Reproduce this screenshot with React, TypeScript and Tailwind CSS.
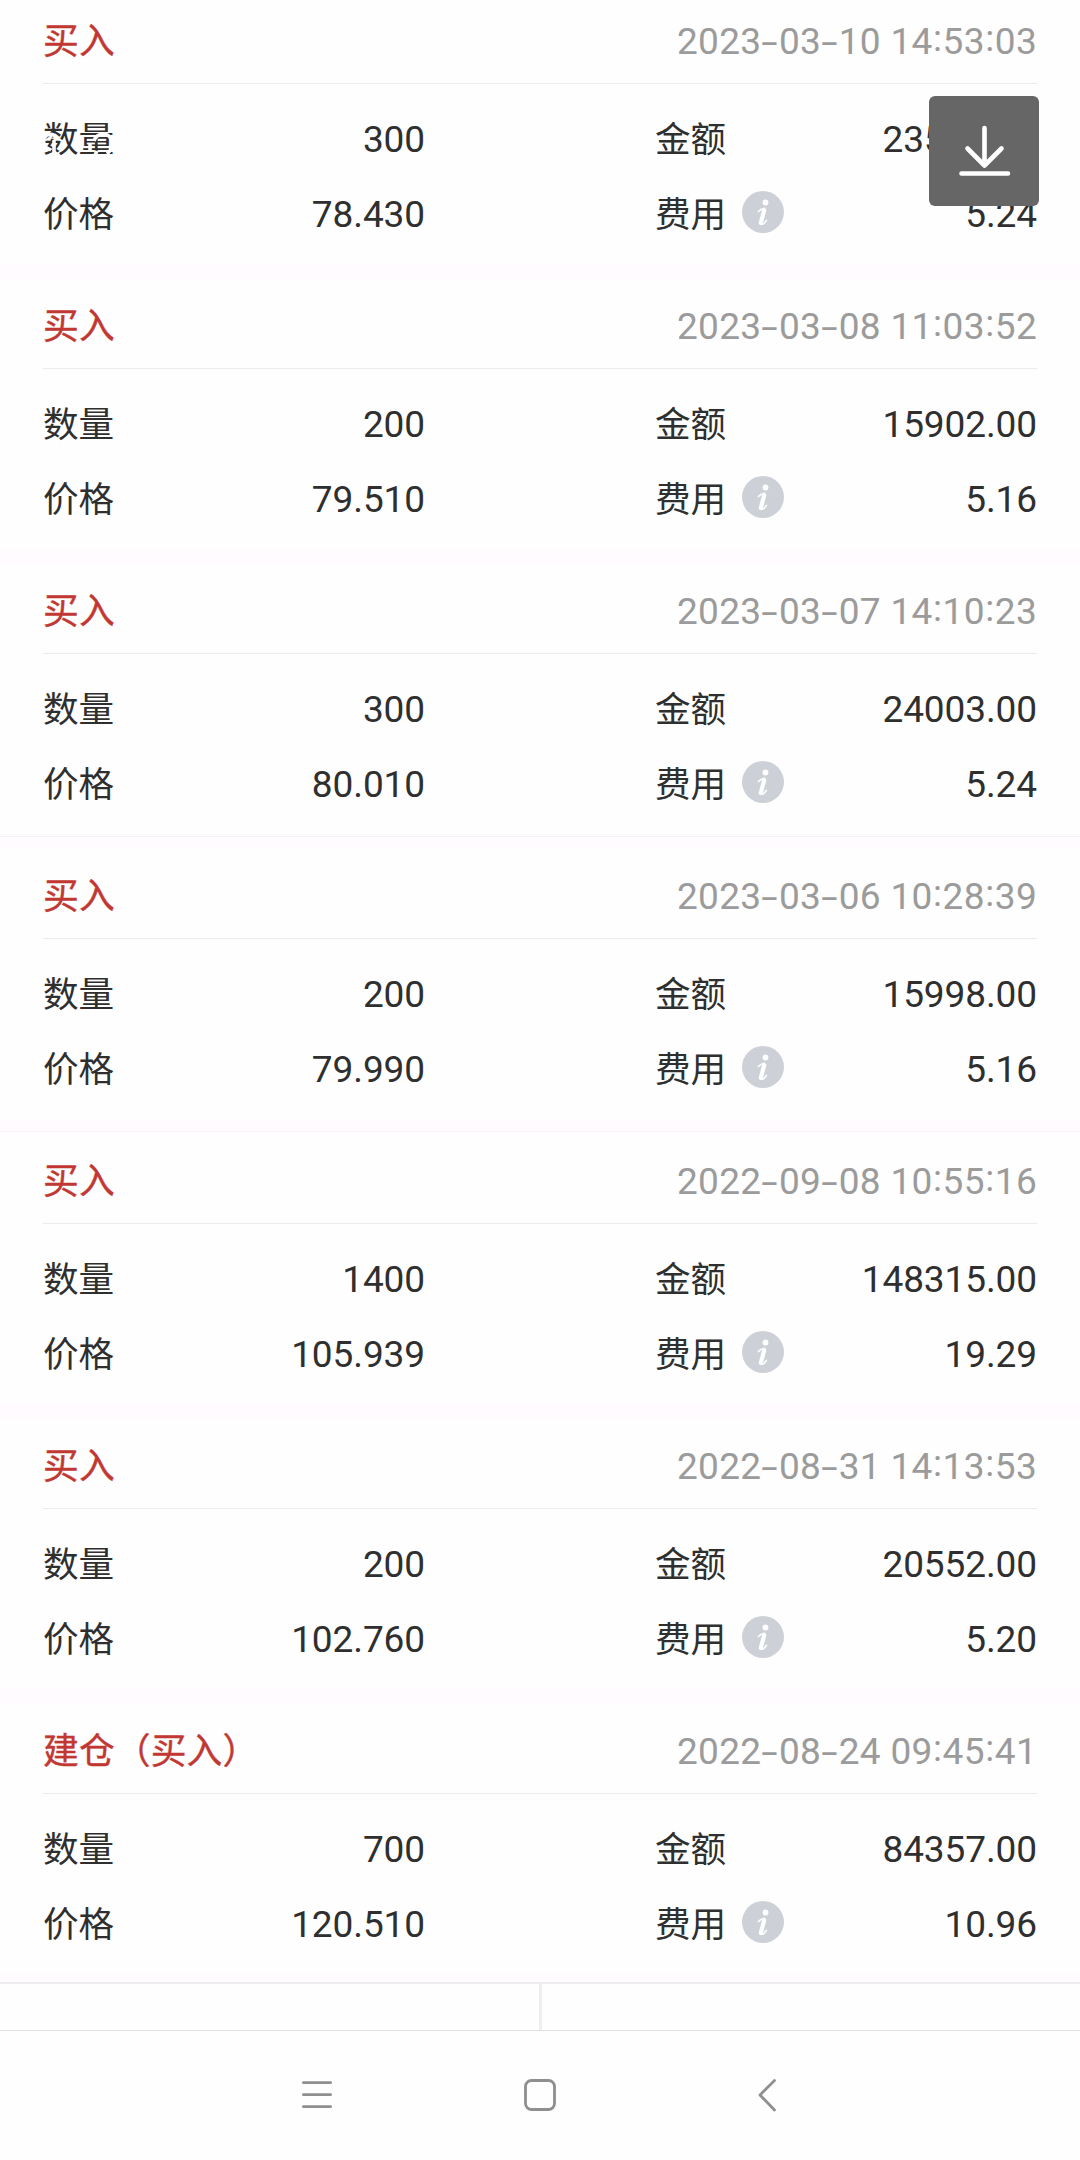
import React from 'react';

type Trade = {
    type: string;
    time: string;
    quantity: string;
    amount: string;
    price: string;
    fee: string;
};

const trades: Trade[] = [
    { type: '买入', time: '2023-03-10 14:53:03', quantity: '300', amount: '23529.00', price: '78.430', fee: '5.24' },
    { type: '买入', time: '2023-03-08 11:03:52', quantity: '200', amount: '15902.00', price: '79.510', fee: '5.16' },
    { type: '买入', time: '2023-03-07 14:10:23', quantity: '300', amount: '24003.00', price: '80.010', fee: '5.24' },
    { type: '买入', time: '2023-03-06 10:28:39', quantity: '200', amount: '15998.00', price: '79.990', fee: '5.16' },
    { type: '买入', time: '2022-09-08 10:55:16', quantity: '1400', amount: '148315.00', price: '105.939', fee: '19.29' },
    { type: '买入', time: '2022-08-31 14:13:53', quantity: '200', amount: '20552.00', price: '102.760', fee: '5.20' },
    { type: '建仓（买入）', time: '2022-08-24 09:45:41', quantity: '700', amount: '84357.00', price: '120.510', fee: '10.96' },
];

const InfoIcon = () => (
    <svg viewBox="0 0 42 42" className="mb-[7px] ml-4 h-[42px] w-[42px]">
        <circle cx="21" cy="21" r="21" fill="#cdd0d7" />
        <circle cx="23.5" cy="11.5" r="2.9" fill="#fff" />
        <path d="M16.4 20.6C18.6 18 20.6 17.6 22.4 17.4M18.6 33C20.6 34 22.6 32.4 24.4 29.4" fill="none" stroke="#fff" strokeWidth="1.6" strokeLinecap="round" />
        <path d="M22.2 19.2L18.8 32" stroke="#fff" strokeWidth="4.2" strokeLinecap="round" />
    </svg>
);

const Time = ({ value }: { value: string }) => (
    <span className="tracking-[0.3px] text-[#9b9b9b]">
        {value.split(/([-:])/).map((part, i) => {
            if (part === '-') return <span key={i} className="inline-block w-[17.6px] translate-y-px scale-x-160 text-center">-</span>;
            if (part === ':') return <span key={i} className="inline-block w-[10px] -translate-y-[3px] text-center">:</span>;
            return <React.Fragment key={i}>{part}</React.Fragment>;
        })}
    </span>
);

const Label = ({ children }: { children: React.ReactNode }) => (
    <span className="flex items-center pt-[2px] text-[35.6px]">{children}</span>
);

const Row = ({ label, value }: { label: React.ReactNode, value: string }) => (
    <div className="flex h-[75px] items-center justify-between">
        <Label>{label}</Label>
        <span className="tracking-[-0.1px]">{value}</span>
    </div>
);

// Restos de una marca de agua sobre la primera etiqueta
const Smudge = () => (
    <svg viewBox="0 0 100 60" className="absolute top-[110px] left-[30px] h-[60px] w-[100px]" fill="none" stroke="#fefefe" strokeWidth="3.6">
        <path d="M14 28C17 23 24 23 26 28M24 30V45M15 37L21 40" />
        <path d="M64 31C66 23 78 22 81 29C83 35 81 41 77 44M60 33V40M67 41L65 45" />
    </svg>
);

const TradeCard = ({ trade, index }: { trade: Trade, index: number }) => (
    <div className="flex h-[285px] flex-col pt-[6px]">
        <div className="mx-[43px] flex h-[84px] items-center justify-between border-b border-[#ebebeb] pb-px">
            <span className="pt-[3px] text-[35.8px] tracking-[0.1px] text-[#c13833] [-webkit-text-stroke:0.4px_#c13833]">{trade.type}</span>
            <Time value={trade.time} />
        </div>
        <div className="mx-[43px] flex h-[180px] justify-between pt-[18px]">
            <div className="w-[382px]">
                <Row label="数量" value={trade.quantity} />
                <Row label="价格" value={trade.price} />
            </div>
            <div className="w-[382px]">
                <Row label="金额" value={trade.amount} />
                <Row label={<>费用<InfoIcon /></>} value={trade.fee} />
            </div>
        </div>
        <div className="h-[15px] bg-[#fffbff]">
            {index === 2 && <div className="h-[3px] border-b border-[#f3f1f6]" />}
            {index === 3 && <div className="h-[13px] border-b border-[#f5f1f5]" />}
        </div>
    </div>
);

export default function App() {
    return (
        <div className="relative h-[2160px] w-[1080px] overflow-hidden bg-[#fefefe] font-['Roboto','Noto_Sans_CJK_SC',sans-serif] text-[37px] leading-none text-[#2f2f2f]">
            <div className="h-[1982px] overflow-hidden">
                <div className="-mt-[6px]">
                    {trades.map((trade, i) => (
                        <TradeCard key={trade.time} trade={trade} index={i} />
                    ))}
                </div>
            </div>

            {/* Barra inferior */}
            <div className="flex h-[49px] border-t-2 border-b border-t-[#ededed] border-b-[#e2e2e2]">
                <div className="w-[542px] border-r-3 border-[#eeeeee]" />
            </div>

            {/* Navegación del sistema */}
            <svg viewBox="0 0 1080 129" className="h-[129px] w-full" fill="none" stroke="#8f8f8f" strokeWidth="2.8" strokeLinecap="round" strokeLinejoin="round">
                <path d="M303.4 51.7H330.6M303.4 63.7H330.6M303.4 75.7H330.6" />
                <rect x="525.5" y="49.5" width="29" height="29" rx="6" />
                <path d="M774.5 49.5L760 64L774.5 79" />
            </svg>

            <Smudge />

            <button className="absolute top-24 left-[929px] flex h-[110px] w-[110px] items-center justify-center rounded-md bg-[#666]">
                <svg viewBox="0 0 110 110" className="h-full w-full" fill="none" stroke="#fff" strokeWidth="4.6" strokeLinecap="round" strokeLinejoin="round">
                    <path d="M55.5 32V69M38.5 52.5L55.5 69.5L72.5 52.5M32.5 77.5H79" />
                </svg>
            </button>
        </div>
    );
}
